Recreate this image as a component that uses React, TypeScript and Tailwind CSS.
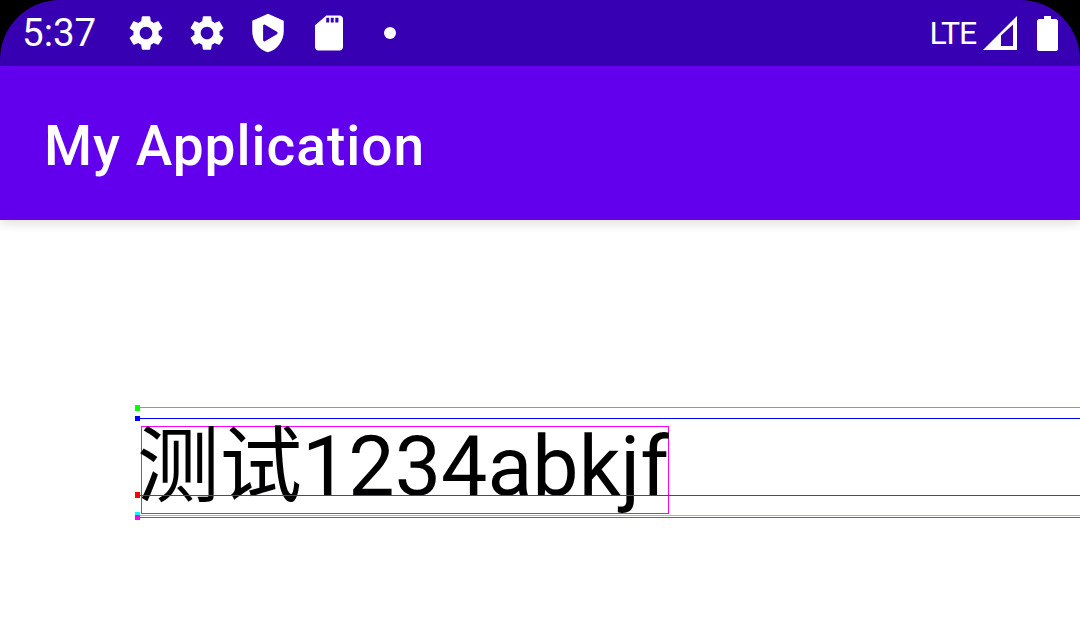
const roboto = "font-['Roboto',sans-serif]";

function Line({ y, color }: { y: string; color: string }) {
  return <div className={`absolute left-[138px] right-0 h-px ${y} ${color}`} />;
}

function Gear() {
  return (
    <svg viewBox="0 0 24 24" className="w-[42px] h-[42px] shrink-0" fill="#fff">
      <path d="M19.14 12.94c.04-.3.06-.61.06-.94 0-.32-.02-.64-.07-.94l2.03-1.58c.18-.14.23-.41.12-.61l-1.92-3.32c-.12-.22-.37-.29-.59-.22l-2.39.96c-.5-.38-1.03-.7-1.62-.94l-.36-2.54c-.04-.24-.24-.41-.48-.41h-3.84c-.24 0-.43.17-.47.41l-.36 2.54c-.59.24-1.13.57-1.62.94l-2.39-.96c-.22-.08-.47 0-.59.22L2.74 8.87c-.12.21-.08.47.12.61l2.03 1.58c-.05.3-.09.63-.09.94s.02.64.07.94l-2.03 1.58c-.18.14-.23.41-.12.61l1.92 3.32c.12.22.37.29.59.22l2.39-.96c.5.38 1.03.7 1.62.94l.36 2.54c.05.24.24.41.48.41h3.84c.24 0 .44-.17.47-.41l.36-2.54c.59-.24 1.13-.56 1.62-.94l2.39.96c.22.08.47 0 .59-.22l1.92-3.32c.12-.22.07-.47-.12-.61l-2.01-1.58zM12 15.6c-1.98 0-3.6-1.62-3.6-3.6s1.62-3.6 3.6-3.6 3.6 1.62 3.6 3.6-1.62 3.6-3.6 3.6z" />
    </svg>
  );
}

export default function App() {
  return (
    <div className="w-[1080px] h-[636px] bg-white overflow-hidden flex flex-col">
      <div className="bg-black shrink-0">
        <div className={`h-[66px] bg-[#3700B3] rounded-t-[60px] flex items-center text-white ${roboto}`}>
          <span className="ml-[22px] w-[87px] text-[38.5px] leading-none">5:37</span>
          <div className="ml-[16px] flex items-center gap-[19px]">
            <Gear />
            <Gear />
          </div>
          <svg viewBox="0 0 24 24" className="ml-[19px] w-[42px] h-[42px] shrink-0" fill="#fff">
            <path
              fillRule="evenodd"
              d="M12 1 3 5v6c0 5.55 3.84 10.74 9 12 5.16-1.26 9-6.45 9-12V5L12 1zM9.2 8c0-.6.6-1 1.100-.7l6.800 4c.5.3.5 1.100 0 1.400l-6.800 4c-.5.3-1.100-.1-1.100-.7V8z"
            />
          </svg>
          <svg viewBox="0 0 24 24" className="ml-[19px] w-[42px] h-[42px] shrink-0" fill="#fff">
            <path
              fillRule="evenodd"
              d="M18 2h-7.500L4.020 7.500 4 20c0 1.100.9 2 2 2h12c1.100 0 2-.9 2-2V4c0-1.100-.9-2-2-2zM10.400 3.300h1.700V6h-1.700V3.300zm2.600 0h1.700V6H13V3.300zm2.600 0h1.800V6h-1.800V3.300z"
            />
          </svg>
          <div className="ml-[34px] w-3 h-3 rounded-full bg-white" />
          <div className="ml-auto flex items-center">
            <span className="text-[32px] leading-none tracking-[-1.2px]">LTE</span>
            <svg viewBox="0 0 34 34" className="ml-[7px] w-[34px] h-[34px] shrink-0">
              <path d="M0 34 34 0v34z" fill="#fff" />
              <path d="M18 30V19.500L30 8.500V30z" fill="#3700B3" />
            </svg>
            <svg viewBox="0 0 21 35" className="ml-[20px] mr-[22px] w-[21px] h-[35px] shrink-0">
              <path d="M7 0h7v3h4.500c1.400 0 2.500 1.100 2.500 2.500V33c0 1.100-.9 2-2 2H2c-1.100 0-2-.9-2-2V5.500C0 4.100 1.100 3 2.500 3H7z" fill="#fff" />
            </svg>
          </div>
        </div>
      </div>
      <div className={`h-[154px] shrink-0 bg-[#6200EE] flex items-center pl-[44px] pt-[6px] shadow-[0_4px_10px_rgba(0,0,0,0.12)] ${roboto}`}>
        <span className="text-white text-[55px] font-medium leading-none tracking-[1px]">My Application</span>
      </div>
      <div className="relative flex-1">
        <Line y="top-[187px]" color="bg-[#00ff00]" />
        <Line y="top-[198px]" color="bg-[#0000ff]" />
        <Line y="top-[275px]" color="bg-[#ff0000]" />
        <Line y="top-[295px]" color="bg-[#00ffff]" />
        <Line y="top-[297px]" color="bg-[#ff00ff]" />
        <div className="absolute left-[135px] top-[185px] w-[5px] h-[6px] bg-[#00ff00]" />
        <div className="absolute left-[135px] top-[196px] w-[5px] h-[5px] bg-[#0000ff]" />
        <div className="absolute left-[135px] top-[272px] w-[5px] h-[6px] bg-[#ff0000]" />
        <div className="absolute left-[135px] top-[292px] w-[5px] h-[4px] bg-[#00ffff]" />
        <div className="absolute left-[135px] top-[295px] w-[5px] h-[5px] bg-[#ff00ff]" />
        <div className="ml-[141px] mt-[206px] w-[528px] h-[88px] border border-[#ff00ff] whitespace-nowrap text-black text-[82.5px] leading-[80px] -indent-[5px] font-['Roboto','Noto_Sans_CJK_SC',sans-serif]">
          测试1234abkjf
        </div>
      </div>
    </div>
  );
}
